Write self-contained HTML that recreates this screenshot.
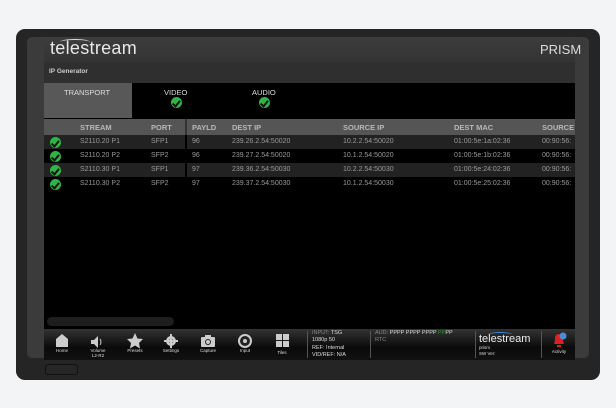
<!DOCTYPE html><html><head><style>
*{margin:0;padding:0;box-sizing:border-box}
body{width:616px;height:408px;background:#f3f4f6;font-family:"Liberation Sans",sans-serif;position:relative;overflow:hidden}
.a{position:absolute}
.t{position:absolute;font-size:7px;color:#9a9a9a;white-space:nowrap}
.h{position:absolute;font-size:7.5px;color:#b8b8b8;font-weight:bold;white-space:nowrap;top:123px}
.ck{position:absolute;width:11px;height:11px;border-radius:50%;background:#2fb545}
.ck:after{content:"";position:absolute;left:3px;top:1.5px;width:3px;height:5.5px;border:solid #111;border-width:0 2px 2px 0;transform:rotate(40deg)}
.lb{position:absolute;font-size:4.5px;color:#ddd;text-align:center;width:30px}
.st{position:absolute;font-size:5.5px;color:#ddd;white-space:nowrap;line-height:7.3px}
</style></head><body>
<div class="a" style="left:16px;top:29px;width:584px;height:351px;background:#252525;border-radius:9px"></div>
<div class="a" style="left:27px;top:37px;width:562px;height:321px;background:#3b3b3b;border-radius:5px"></div>
<div class="a" style="left:44px;top:37px;width:531px;height:25px;background:linear-gradient(#3d3d3d,#333)"></div>
<div class="a" style="left:50px;top:38px;font-size:18px;color:#e8e8e8;letter-spacing:0.3px">telestream</div>
<div class="a" style="left:60px;top:39px;width:30px;height:6px;border-top:1.5px solid #ddd;border-radius:50%"></div>
<div class="a" style="left:540px;top:42px;font-size:13px;color:#ddd">PRISM</div>
<div class="a" style="left:44px;top:62px;width:531px;height:21px;background:#2f2f2f"></div>
<div class="a" style="left:49px;top:68px;font-size:6.5px;color:#ccc;font-weight:bold">IP Generator</div>
<div class="a" style="left:44px;top:83px;width:531px;height:246px;background:#000"></div>
<div class="a" style="left:44px;top:83px;width:88px;height:35px;background:#585858"></div>
<div class="a" style="left:64px;top:88px;font-size:7.5px;color:#ddd">TRANSPORT</div>
<div class="a" style="left:164px;top:88px;font-size:7.5px;color:#ddd">VIDEO</div>
<div class="ck" style="left:171px;top:97px"></div>
<div class="a" style="left:252px;top:88px;font-size:7.5px;color:#ddd">AUDIO</div>
<div class="ck" style="left:259px;top:97px"></div>
<div class="a" style="left:44px;top:119px;width:531px;height:16px;background:#555"></div>
<div class="a" style="left:44px;top:135px;width:531px;height:14px;background:#222"></div>
<div class="a" style="left:44px;top:163px;width:531px;height:14px;background:#222"></div>
<div class="a" style="left:185px;top:119px;width:2px;height:16px;background:#333"></div>
<div class="a" style="left:185px;top:135px;width:2px;height:14px;background:#000"></div>
<div class="a" style="left:185px;top:163px;width:2px;height:14px;background:#000"></div>
<div class="h" style="left:80px">STREAM</div><div class="h" style="left:151px">PORT</div><div class="h" style="left:192px">PAYLD</div><div class="h" style="left:232px">DEST IP</div><div class="h" style="left:343px">SOURCE IP</div><div class="h" style="left:454px">DEST MAC</div><div class="h" style="left:542px">SOURCE</div>
<div class="ck" style="left:50px;top:137px"></div><div class="ck" style="left:50px;top:151px"></div><div class="ck" style="left:50px;top:165px"></div><div class="ck" style="left:50px;top:179px"></div>
<div class="t" style="left:80px;top:138px">S2110.20 P1</div><div class="t" style="left:151px;top:138px">SFP1</div><div class="t" style="left:192px;top:138px">96</div><div class="t" style="left:232px;top:138px">239.26.2.54:50020</div><div class="t" style="left:343px;top:138px">10.2.2.54:50020</div><div class="t" style="left:454px;top:138px">01:00:5e:1a:02:36</div><div class="t" style="left:542px;top:138px">00:90:56:</div>
<div class="t" style="left:80px;top:152px">S2110.20 P2</div><div class="t" style="left:151px;top:152px">SFP2</div><div class="t" style="left:192px;top:152px">96</div><div class="t" style="left:232px;top:152px">239.27.2.54:50020</div><div class="t" style="left:343px;top:152px">10.1.2.54:50020</div><div class="t" style="left:454px;top:152px">01:00:5e:1b:02:36</div><div class="t" style="left:542px;top:152px">00:90:56:</div>
<div class="t" style="left:80px;top:166px">S2110.30 P1</div><div class="t" style="left:151px;top:166px">SFP1</div><div class="t" style="left:192px;top:166px">97</div><div class="t" style="left:232px;top:166px">239.36.2.54:50030</div><div class="t" style="left:343px;top:166px">10.2.2.54:50030</div><div class="t" style="left:454px;top:166px">01:00:5e:24:02:36</div><div class="t" style="left:542px;top:166px">00:90:56:</div>
<div class="t" style="left:80px;top:180px">S2110.30 P2</div><div class="t" style="left:151px;top:180px">SFP2</div><div class="t" style="left:192px;top:180px">97</div><div class="t" style="left:232px;top:180px">239.37.2.54:50030</div><div class="t" style="left:343px;top:180px">10.1.2.54:50030</div><div class="t" style="left:454px;top:180px">01:00:5e:25:02:36</div><div class="t" style="left:542px;top:180px">00:90:56:</div>
<div class="a" style="left:47px;top:317px;width:127px;height:9px;background:#1e1e1e;border-radius:5px"></div>
<div class="a" style="left:44px;top:329px;width:531px;height:31px;background:linear-gradient(#333,#0a0a0a 60%,#111)"></div>
<svg class="a" style="left:44px;top:329px" width="260" height="31" fill="#ccc">
<path d="M12 10 L18 5 L24 10 V18 H12Z"/>
<path d="M47 11 H50 L54 7 V19 L50 15 H47Z"/><path d="M56 10 Q58 13 56 16" stroke="#ccc" fill="none"/>
<path d="M91 4 L93.5 9.5 L99 10 L95 14 L96 19.5 L91 16.5 L86 19.5 L87 14 L83 10 L88.5 9.5Z"/>
<circle cx="127" cy="12" r="5"/><circle cx="127" cy="12" r="2" fill="#222"/><path d="M126 5h2v14h-2zM120 11h14v2h-14z"/>
<rect x="157" y="8" width="14" height="10" rx="1"/><rect x="161" y="6" width="6" height="3"/><circle cx="164" cy="13" r="3" fill="#222"/><circle cx="164" cy="13" r="2"/>
<circle cx="201" cy="12" r="7"/><circle cx="201" cy="12" r="5" fill="#222"/><circle cx="201" cy="12" r="2"/>
<rect x="232" y="5" width="6" height="6"/><rect x="239" y="5" width="6" height="6"/><rect x="232" y="12" width="6" height="6"/><rect x="239" y="12" width="6" height="6"/>
</svg>
<div class="lb" style="left:47px;top:348px">Home</div><div class="lb" style="left:83px;top:348px">Volume<br>L2-R2</div><div class="lb" style="left:120px;top:348px">Presets</div><div class="lb" style="left:156px;top:348px">Settings</div><div class="lb" style="left:193px;top:348px">Capture</div><div class="lb" style="left:230px;top:348px">Input</div><div class="lb" style="left:267px;top:350px">Tiles</div>
<div class="a" style="left:307px;top:331px;width:1px;height:27px;background:#555"></div>
<div class="st" style="left:312px;top:330px"><span style="color:#888">INPUT:</span> TSG<br>1080p 50<br>REF: Internal<br>VID/REF: N/A</div>
<div class="a" style="left:370px;top:331px;width:1px;height:27px;background:#555"></div>
<div class="st" style="left:375px;top:330px"><span style="color:#888">AUD:</span> PPPP PPPP PPPP <span style="color:#2a8a2a">PP</span>PP<br><span style="color:#888">RTC</span></div>
<div class="a" style="left:475px;top:331px;width:1px;height:27px;background:#555"></div>
<div class="a" style="left:479px;top:333px;font-size:11px;color:#eee">telestream</div>
<div class="a" style="left:488px;top:332px;width:24px;height:5px;border-top:1.5px solid #3a8ad8;border-radius:50%"></div>
<div class="st" style="left:479px;top:345px;font-size:4.5px;line-height:6px">prism<br>SW Ver:</div>
<div class="a" style="left:541px;top:331px;width:1px;height:27px;background:#555"></div>
<svg class="a" style="left:550px;top:332px" width="20" height="16"><path d="M4 12 Q5 10 5 6 Q5 2 9 2 Q13 2 13 6 Q13 10 14 12Z M7 13h4v2h-4z" fill="#e02020"/><circle cx="13" cy="4" r="3.5" fill="#4a8de0"/></svg>
<div class="lb" style="left:544px;top:349px">Activity</div>
<div class="a" style="left:45px;top:364px;width:33px;height:11px;border:1px solid #111;border-radius:3px;background:#262626"></div>
</body></html>
